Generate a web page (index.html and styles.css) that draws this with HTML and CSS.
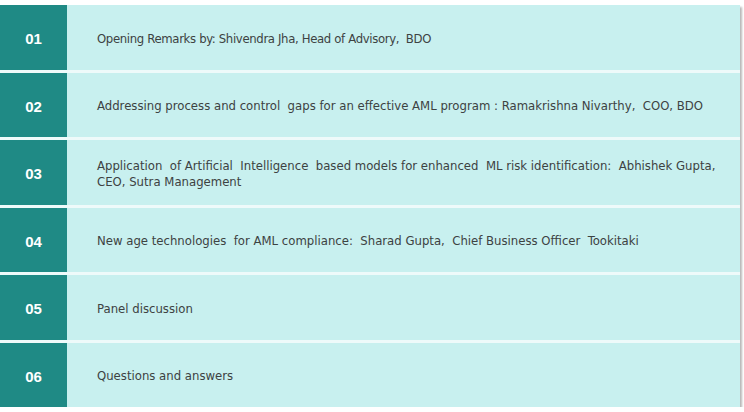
FILE: index.html
```html
<!DOCTYPE html>
<html>
<head>
<meta charset="utf-8">
<link rel="stylesheet" href="styles.css">
</head>
<body>
<div class="agenda">
  <div class="row"><div class="num">01</div><div class="txt txt-tight">Opening Remarks by: Shivendra Jha, Head of Advisory,&nbsp; BDO</div></div>
  <div class="row"><div class="num">02</div><div class="txt">Addressing process and control&nbsp; gaps for an effective AML program : Ramakrishna Nivarthy,&nbsp; COO, BDO</div></div>
  <div class="row"><div class="num">03</div><div class="txt">Application&nbsp; of Artificial&nbsp; Intelligence&nbsp; based models for enhanced&nbsp; ML risk identification:&nbsp; Abhishek Gupta, CEO, Sutra Management</div></div>
  <div class="row"><div class="num">04</div><div class="txt">New age technologies&nbsp; for AML compliance:&nbsp; Sharad Gupta,&nbsp; Chief Business Officer&nbsp; Tookitaki</div></div>
  <div class="row"><div class="num">05</div><div class="txt">Panel discussion</div></div>
  <div class="row"><div class="num">06</div><div class="txt">Questions and answers</div></div>
</div>
</body>
</html>
```
FILE: styles.css
```css
html, body {
  margin: 0;
  padding: 0;
  background: #ffffff;
}
body {
  padding-top: 5px;
}
.agenda {
  width: 740px;
  height: 402px;
  display: grid;
  grid-template-rows: repeat(6, 1fr);
  row-gap: 3px;
  background: #eefafa;
  box-shadow: 2px 2px 2px #b8b8b8;
}
.row {
  display: flex;
  align-items: stretch;
  background: #c8f0ef;
}
.num {
  width: 67px;
  flex: none;
  background: #1f8a85;
  color: #ffffff;
  font-family: "Liberation Sans", Arial, sans-serif;
  font-weight: bold;
  font-size: 15px;
  display: flex;
  align-items: center;
  justify-content: center;
  padding-top: 3px;
  box-sizing: border-box;
}
.txt {
  flex: 1;
  display: flex;
  align-items: center;
  padding: 3px 20px 0 30px;
  font-family: "DejaVu Sans Condensed", "DejaVu Sans", sans-serif;
  font-size: 13px;
  line-height: 16px;
  color: #3d4242;
}
.txt-tight {
  letter-spacing: -0.35px;
}
```
